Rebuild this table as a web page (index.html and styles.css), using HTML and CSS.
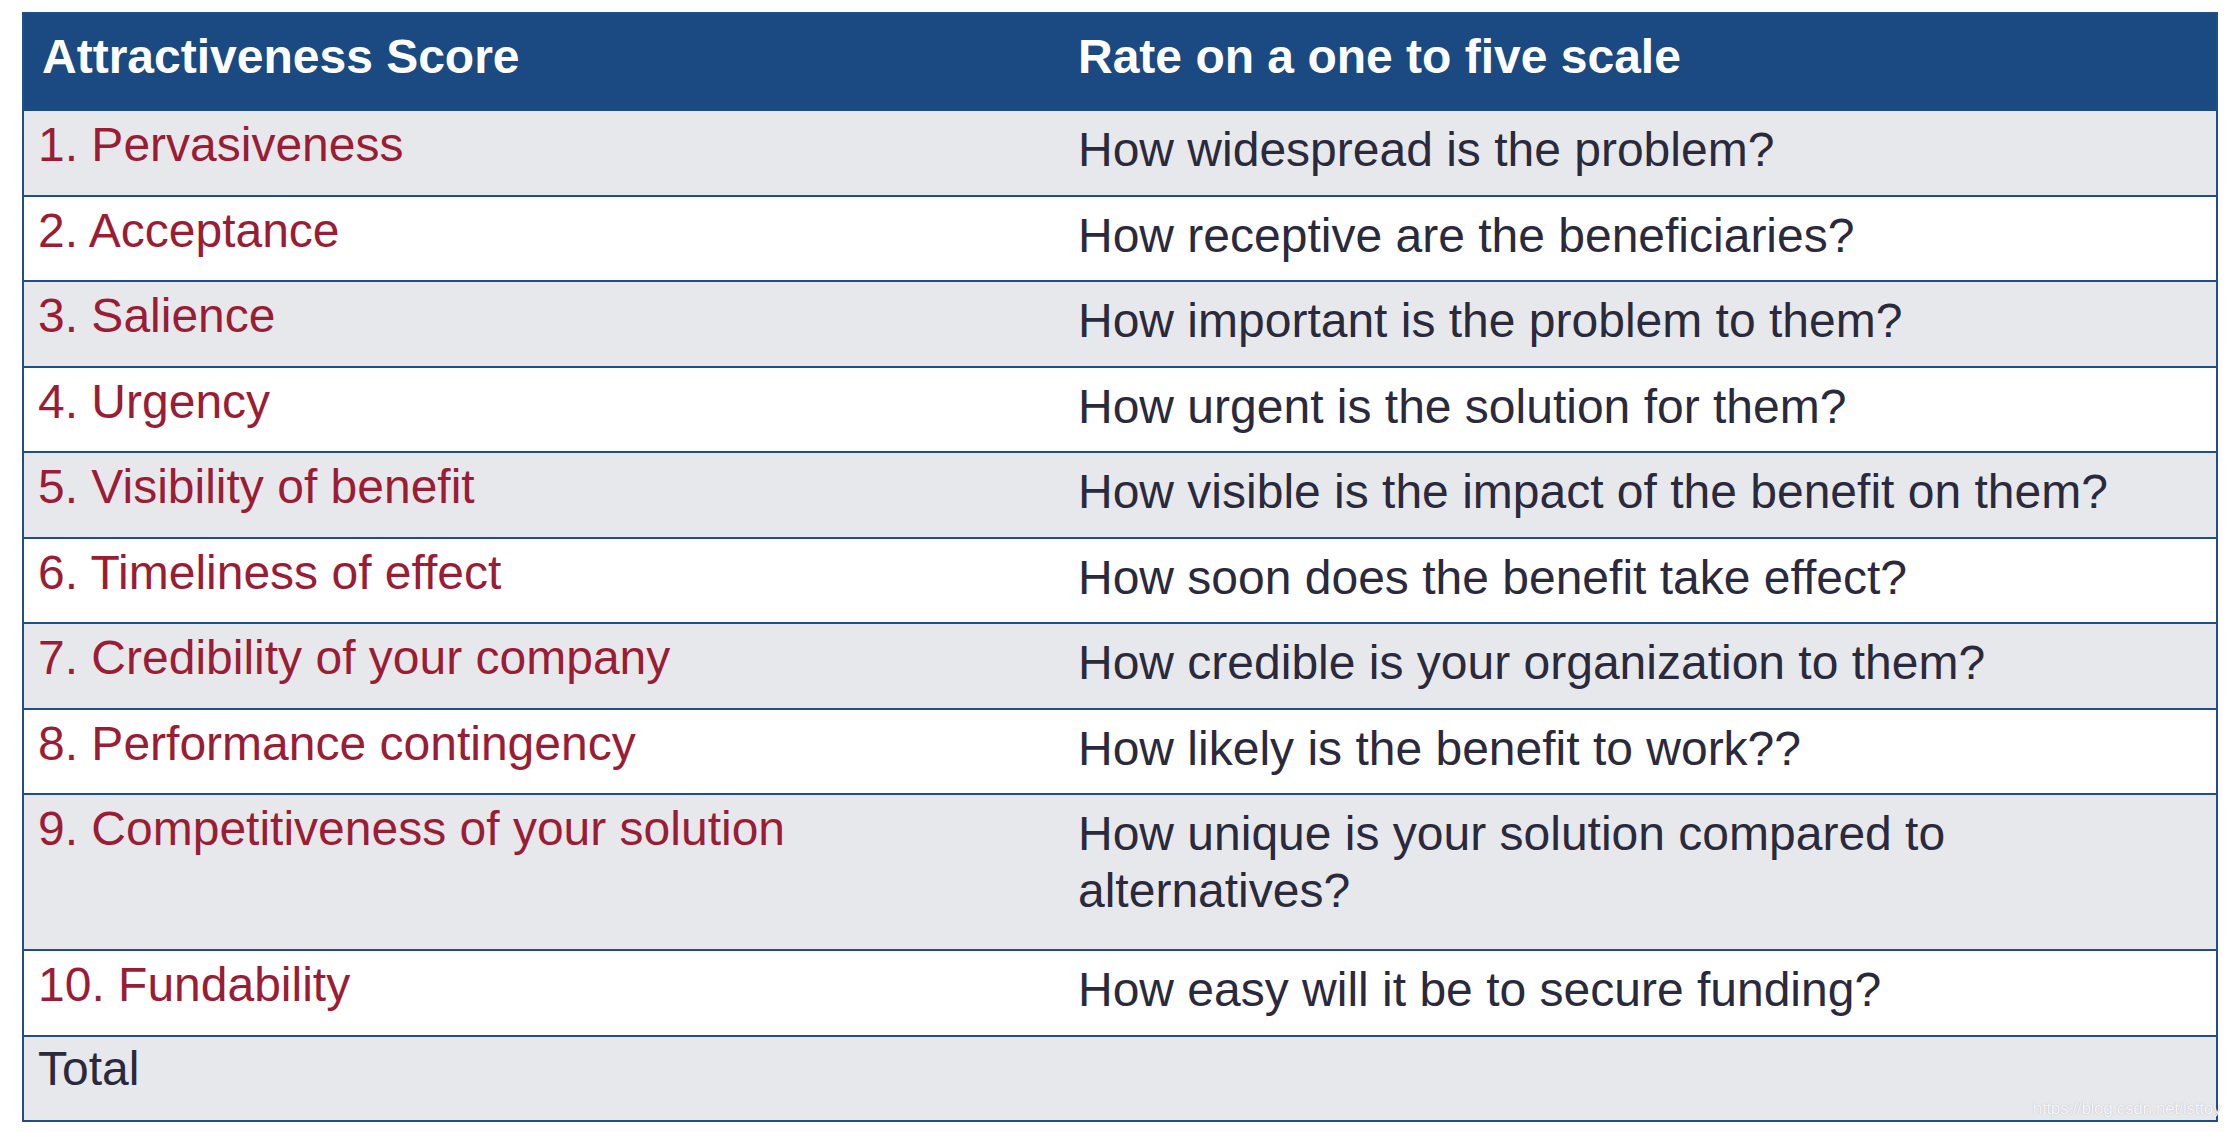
FILE: index.html
```html
<!DOCTYPE html>
<html lang="en">
<head>
<meta charset="utf-8">
<title>Attractiveness Score</title>
<link rel="stylesheet" href="styles.css">
</head>
<body>
<div class="sheet">
  <div class="score-table">
    <div class="row head">
      <div class="cell c1">Attractiveness Score</div>
      <div class="cell c2">Rate on a one to five scale</div>
    </div>
    <div class="row gray">
      <div class="cell c1 crit">1. Pervasiveness</div>
      <div class="cell c2">How widespread is the problem?</div>
    </div>
    <div class="row white">
      <div class="cell c1 crit">2. Acceptance</div>
      <div class="cell c2">How receptive are the beneficiaries?</div>
    </div>
    <div class="row gray">
      <div class="cell c1 crit">3. Salience</div>
      <div class="cell c2">How important is the problem to them?</div>
    </div>
    <div class="row white">
      <div class="cell c1 crit">4. Urgency</div>
      <div class="cell c2">How urgent is the solution for them?</div>
    </div>
    <div class="row gray">
      <div class="cell c1 crit">5. Visibility of benefit</div>
      <div class="cell c2">How visible is the impact of the benefit on them?</div>
    </div>
    <div class="row white">
      <div class="cell c1 crit">6. Timeliness of effect</div>
      <div class="cell c2">How soon does the benefit take effect?</div>
    </div>
    <div class="row gray">
      <div class="cell c1 crit">7. Credibility of your company</div>
      <div class="cell c2">How credible is your organization to them?</div>
    </div>
    <div class="row white">
      <div class="cell c1 crit">8. Performance contingency</div>
      <div class="cell c2">How likely is the benefit to work??</div>
    </div>
    <div class="row gray tall">
      <div class="cell c1 crit">9. Competitiveness of your solution</div>
      <div class="cell c2">How unique is your solution compared to alternatives?</div>
    </div>
    <div class="row white">
      <div class="cell c1 crit">10. Fundability</div>
      <div class="cell c2">How easy will it be to secure funding?</div>
    </div>
    <div class="row gray total">
      <div class="cell c1">Total</div>
      <div class="cell c2"></div>
    </div>
    <div class="watermark">https://blog.csdn.net/lsttoy</div>
  </div>
</div>
</body>
</html>
```

FILE: styles.css
```css
html, body {
  margin: 0;
  padding: 0;
  background: #ffffff;
}

body {
  font-family: "Liberation Sans", Arial, Helvetica, sans-serif;
  color: #2b2a3c;
}

.sheet {
  padding: 12px 0 0 22px;
}

.score-table {
  position: relative;
  width: 2196px;
  box-sizing: border-box;
  border: 2px solid #1f4f8b;
}

.row {
  display: grid;
  grid-template-columns: 1032px 1fr;
  box-sizing: border-box;
  height: 85.5px;
  border-bottom: 2px solid #1f4f8b;
}

.row.head {
  height: 97px;
  border-bottom: none;
  background: #1a4a81;
  color: #ffffff;
  font-weight: bold;
}

.row.gray {
  background: #e7e8ec;
}

.row.white {
  background: #ffffff;
}

.row.tall {
  height: 156px;
}

.row.total {
  height: 83.5px;
  border-bottom: none;
}

.cell {
  font-size: 48px;
  line-height: 56.5px;
  white-space: normal;
}

.c1 {
  padding: 6px 0 0 14px;
}

.c2 {
  padding: 11px 20px 0 22px;
}

.head .c1 {
  padding: 15px 0 0 18px;
}

.head .c2 {
  padding: 15px 0 0 22px;
}

.total .c1 {
  padding-top: 4px;
}

.crit {
  color: #9b1d35;
}

.watermark {
  position: absolute;
  right: -5px;
  bottom: 0px;
  font-size: 17px;
  line-height: 22px;
  letter-spacing: -0.3px;
  color: #f6f6f8;
  text-shadow: 0 0 1px rgba(60, 60, 80, 0.35);
}
```
